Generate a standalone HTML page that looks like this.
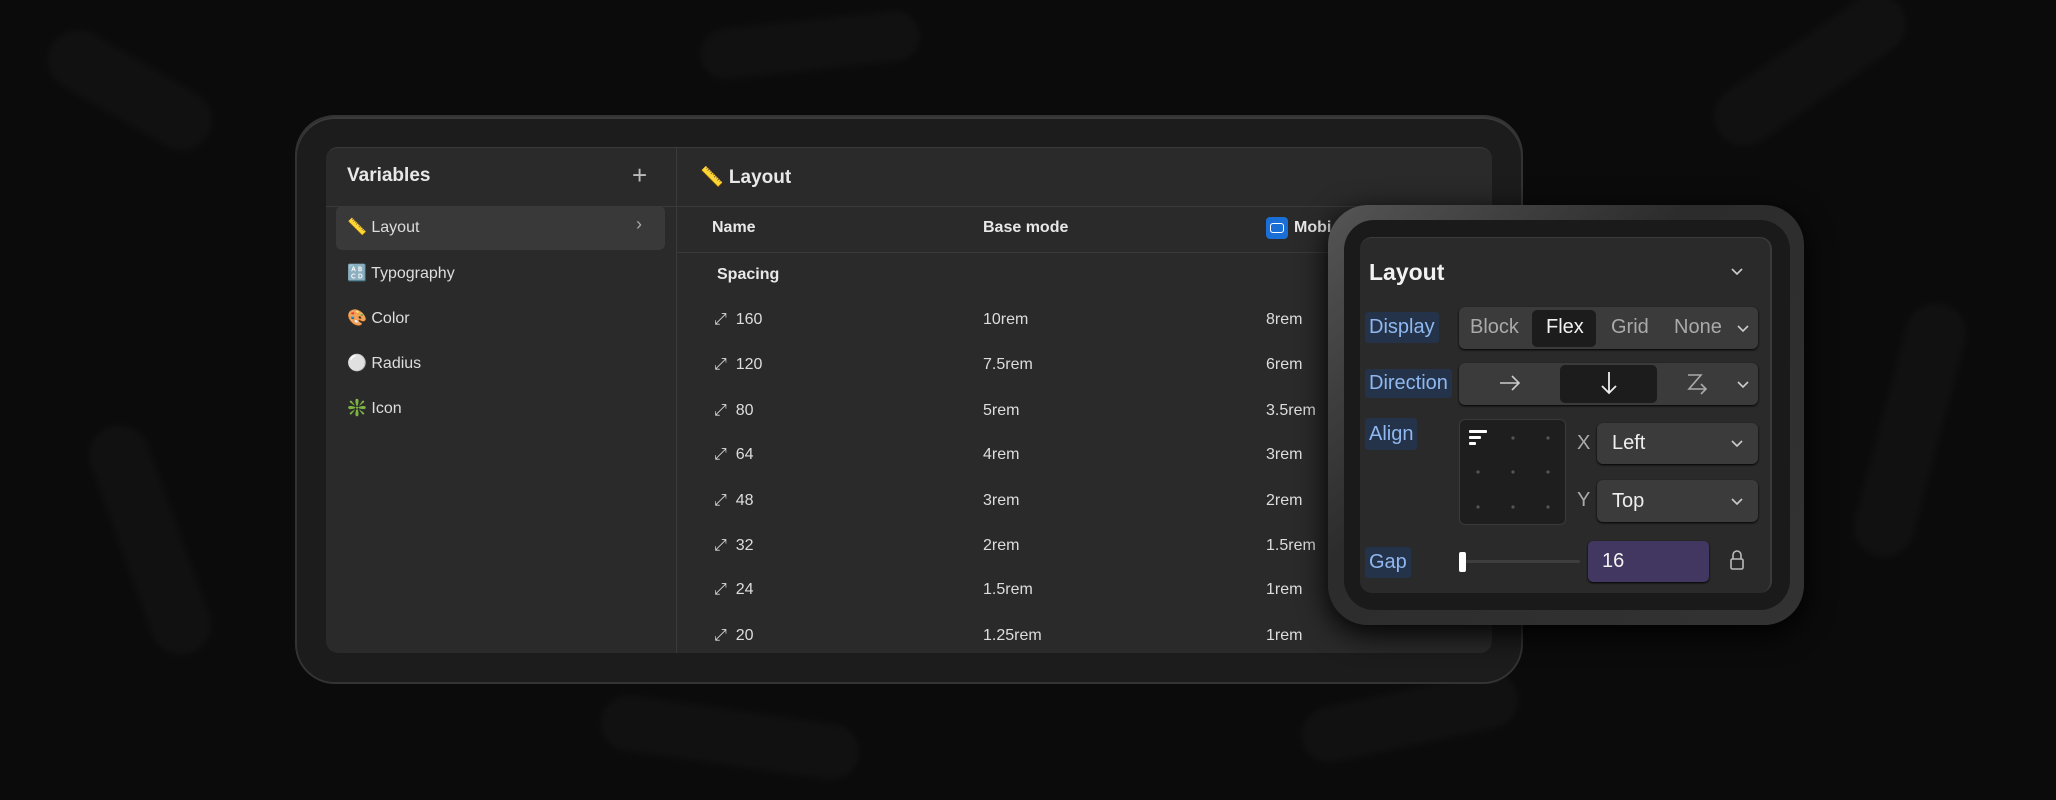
<!DOCTYPE html>
<html><head><meta charset="utf-8"><style>
*{box-sizing:border-box;margin:0;padding:0}
body{width:2056px;height:800px;overflow:hidden;background:#0b0b0b;font-family:"Liberation Sans",sans-serif;color:#e8e8e8;position:relative}
.abs{position:absolute}
.bone{position:absolute;background:#111;border-radius:40px;filter:blur(3px)}
.frame{left:295px;top:115px;width:1228px;height:569px;border-radius:40px;background:#1c1c1c;border:2px solid #333;box-shadow:inset 0 2px 0 #3a3a3a}
.panel{left:326px;top:147px;width:1166px;height:506px;border-radius:12px;background:#2a2a2a;overflow:hidden;border-top:1px solid #3a3a3a}
.t{position:absolute;white-space:nowrap}
.side{font-size:16px;color:#ddd}
.row{font-size:16px;color:#ddd}
.lbl{position:absolute;background:#243349;color:#8fb8f0;font-size:20px;border-radius:3px;padding:0 4px;line-height:31px}
.seg{position:absolute;background:#3b3b3b;border-radius:6px;box-shadow:0 1px 2px #000}
.sel{position:absolute;background:#3b3b3b;border-radius:6px;box-shadow:0 1px 2px #000;color:#eee;font-size:20px}
</style></head><body>
<div class="bone" style="left:40px;top:60px;width:180px;height:60px;transform:rotate(30deg)"></div>
<div class="bone" style="left:120px;top:420px;width:60px;height:240px;transform:rotate(-20deg)"></div>
<div class="bone" style="left:1700px;top:40px;width:220px;height:60px;transform:rotate(-35deg)"></div>
<div class="bone" style="left:1880px;top:300px;width:60px;height:260px;transform:rotate(15deg)"></div>
<div class="bone" style="left:600px;top:710px;width:260px;height:55px;transform:rotate(8deg)"></div>
<div class="bone" style="left:1300px;top:690px;width:220px;height:55px;transform:rotate(-12deg)"></div>
<div class="bone" style="left:700px;top:20px;width:220px;height:50px;transform:rotate(-6deg)"></div>

<div class="abs frame"></div>
<div class="abs panel">
  <div class="abs" style="left:350px;top:0;width:1px;height:506px;background:#3a3a3a"></div>
  <div class="abs" style="left:0;top:58px;width:1166px;height:1px;background:#3a3a3a"></div>
  <div class="abs" style="left:350px;top:104px;width:816px;height:1px;background:#3a3a3a"></div>
  <div class="abs" style="left:10px;top:58px;width:329px;height:44px;background:#393939;border-radius:6px"></div>
</div>
<div class="t" style="left:347px;top:165px;font-size:19px;font-weight:bold">Variables</div>
<div class="t" style="left:632px;top:160px;font-size:26px;color:#bbb;font-weight:300">+</div>
<div class="t" style="left:700px;top:165px;font-size:19px;font-weight:bold">📏 Layout</div>
<div class="t side" style="left:347px;top:217px">📏 Layout</div>
<div class="t" style="left:636px;top:214px;font-size:18px;color:#aaa">›</div>
<div class="t side" style="left:347px;top:263px">🔠 Typography</div>
<div class="t side" style="left:347px;top:308px">🎨 Color</div>
<div class="t side" style="left:347px;top:353px">⚪ Radius</div>
<div class="t side" style="left:347px;top:398px">❇️ Icon</div>

<div class="t" style="left:712px;top:219px;font-size:16px;font-weight:bold">Name</div>
<div class="t" style="left:983px;top:219px;font-size:16px;font-weight:bold">Base mode</div>
<div class="abs" style="left:1266px;top:217px;width:22px;height:22px;background:#1a6fd6;border-radius:4px"><div class="abs" style="left:4px;top:6px;width:14px;height:10px;border:1.5px solid #fff;border-radius:3px"></div></div>
<div class="t" style="left:1294px;top:219px;font-size:16px;font-weight:bold">Mobi</div>
<div class="t" style="left:717px;top:266px;font-size:16px;font-weight:bold">Spacing</div>

<div class="t row" style="left:714px;top:311px">⤢&nbsp; 160</div><div class="t row" style="left:983px;top:311px">10rem</div><div class="t row" style="left:1266px;top:311px">8rem</div>
<div class="t row" style="left:714px;top:356px">⤢&nbsp; 120</div><div class="t row" style="left:983px;top:356px">7.5rem</div><div class="t row" style="left:1266px;top:356px">6rem</div>
<div class="t row" style="left:714px;top:402px">⤢&nbsp; 80</div><div class="t row" style="left:983px;top:402px">5rem</div><div class="t row" style="left:1266px;top:402px">3.5rem</div>
<div class="t row" style="left:714px;top:446px">⤢&nbsp; 64</div><div class="t row" style="left:983px;top:446px">4rem</div><div class="t row" style="left:1266px;top:446px">3rem</div>
<div class="t row" style="left:714px;top:492px">⤢&nbsp; 48</div><div class="t row" style="left:983px;top:492px">3rem</div><div class="t row" style="left:1266px;top:492px">2rem</div>
<div class="t row" style="left:714px;top:537px">⤢&nbsp; 32</div><div class="t row" style="left:983px;top:537px">2rem</div><div class="t row" style="left:1266px;top:537px">1.5rem</div>
<div class="t row" style="left:714px;top:581px">⤢&nbsp; 24</div><div class="t row" style="left:983px;top:581px">1.5rem</div><div class="t row" style="left:1266px;top:581px">1rem</div>
<div class="t row" style="left:714px;top:627px">⤢&nbsp; 20</div><div class="t row" style="left:983px;top:627px">1.25rem</div><div class="t row" style="left:1266px;top:627px">1rem</div>

<!-- floating panel -->
<div class="abs" style="left:1328px;top:205px;width:476px;height:420px;border-radius:40px;background:linear-gradient(135deg,#555,#2c2c2c 40%,#333);box-shadow:0 8px 30px #000"></div>
<div class="abs" style="left:1344px;top:220px;width:446px;height:390px;border-radius:30px;background:#1a1a1a"></div>
<div class="abs" style="left:1360px;top:237px;width:412px;height:356px;border-radius:12px;background:#2a2a2a;border-top:1px solid #3c3c3c;border-right:2px solid #3a3a3a"></div>
<div class="t" style="left:1369px;top:259px;font-size:23px;font-weight:bold;color:#f2f2f2">Layout</div>
<svg class="abs" style="left:1730px;top:267px" width="14" height="10"><path d="M2 2l5 5 5-5" stroke="#ccc" stroke-width="1.6" fill="none"/></svg>

<div class="lbl" style="left:1365px;top:312px">Display</div>
<div class="seg" style="left:1459px;top:307px;width:299px;height:42px"></div>
<div class="abs" style="left:1532px;top:310px;width:64px;height:37px;background:#1c1c1c;border-radius:5px"></div>
<div class="t" style="left:1470px;top:316px;font-size:20px;color:#aaa">Block</div>
<div class="t" style="left:1546px;top:316px;font-size:20px;color:#f2f2f2">Flex</div>
<div class="t" style="left:1611px;top:316px;font-size:20px;color:#aaa">Grid</div>
<div class="t" style="left:1674px;top:316px;font-size:20px;color:#aaa">None</div>
<svg class="abs" style="left:1736px;top:324px" width="14" height="10"><path d="M2 2l5 5 5-5" stroke="#ccc" stroke-width="1.6" fill="none"/></svg>

<div class="lbl" style="left:1365px;top:369px;line-height:29px">Direction</div>
<div class="seg" style="left:1459px;top:363px;width:299px;height:42px"></div>
<div class="abs" style="left:1560px;top:365px;width:97px;height:38px;background:#1c1c1c;border-radius:5px"></div>
<svg class="abs" style="left:1498px;top:374px" width="24" height="18"><path d="M2 9h19M14 2l7 7-7 7" stroke="#ccc" stroke-width="1.6" fill="none"/></svg>
<svg class="abs" style="left:1600px;top:370px" width="18" height="26"><path d="M9 2v21M2 16l7 7 7-7" stroke="#eee" stroke-width="1.8" fill="none"/></svg>
<svg class="abs" style="left:1686px;top:372px" width="24" height="24"><path d="M2 3h13L3 17h17M15 12l5 5-5 5" stroke="#aaa" stroke-width="1.6" fill="none"/></svg>
<svg class="abs" style="left:1736px;top:380px" width="14" height="10"><path d="M2 2l5 5 5-5" stroke="#ccc" stroke-width="1.6" fill="none"/></svg>

<div class="lbl" style="left:1365px;top:418px;line-height:32px">Align</div>
<div class="abs" style="left:1459px;top:419px;width:107px;height:106px;background:#1e1e1e;border:1px solid #3a3a3a;border-radius:6px"></div>
<div class="abs" style="left:1469px;top:430px;width:18px;height:3px;background:#fff;border-radius:1px"></div>
<div class="abs" style="left:1469px;top:436px;width:12px;height:3px;background:#fff;border-radius:1px"></div>
<div class="abs" style="left:1469px;top:442px;width:7px;height:3px;background:#fff;border-radius:1px"></div>
<svg class="abs" style="left:1459px;top:419px" width="107" height="106" fill="#555"><circle cx="54" cy="19" r="1.6"/><circle cx="89" cy="19" r="1.6"/><circle cx="19" cy="53" r="1.6"/><circle cx="54" cy="53" r="1.6"/><circle cx="89" cy="53" r="1.6"/><circle cx="19" cy="88" r="1.6"/><circle cx="54" cy="88" r="1.6"/><circle cx="89" cy="88" r="1.6"/></svg>
<div class="t" style="left:1577px;top:432px;font-size:20px;color:#aaa">X</div>
<div class="sel" style="left:1597px;top:423px;width:161px;height:41px"><span class="t" style="left:15px;top:9px">Left</span></div>
<svg class="abs" style="left:1730px;top:439px" width="14" height="10"><path d="M2 2l5 5 5-5" stroke="#ccc" stroke-width="1.6" fill="none"/></svg>
<div class="t" style="left:1577px;top:489px;font-size:20px;color:#aaa">Y</div>
<div class="sel" style="left:1597px;top:480px;width:161px;height:42px"><span class="t" style="left:15px;top:10px">Top</span></div>
<svg class="abs" style="left:1730px;top:497px" width="14" height="10"><path d="M2 2l5 5 5-5" stroke="#ccc" stroke-width="1.6" fill="none"/></svg>

<div class="lbl" style="left:1365px;top:547px">Gap</div>
<div class="abs" style="left:1462px;top:560px;width:118px;height:3px;background:#3e3e3e;border-radius:2px"></div>
<div class="abs" style="left:1459px;top:552px;width:7px;height:20px;background:#fff;border-radius:2px"></div>
<div class="abs" style="left:1588px;top:541px;width:121px;height:41px;background:#423760;border-radius:5px;box-shadow:0 1px 2px #000"></div>
<div class="t" style="left:1602px;top:550px;font-size:20px;color:#f2f2f2">16</div>
<svg class="abs" style="left:1729px;top:549px" width="16" height="22"><path d="M4 10V6a4 4 0 0 1 8 0v4" stroke="#bbb" stroke-width="1.6" fill="none"/><rect x="2" y="10" width="12" height="10" rx="1.5" stroke="#bbb" stroke-width="1.6" fill="none"/></svg>
</body></html>
